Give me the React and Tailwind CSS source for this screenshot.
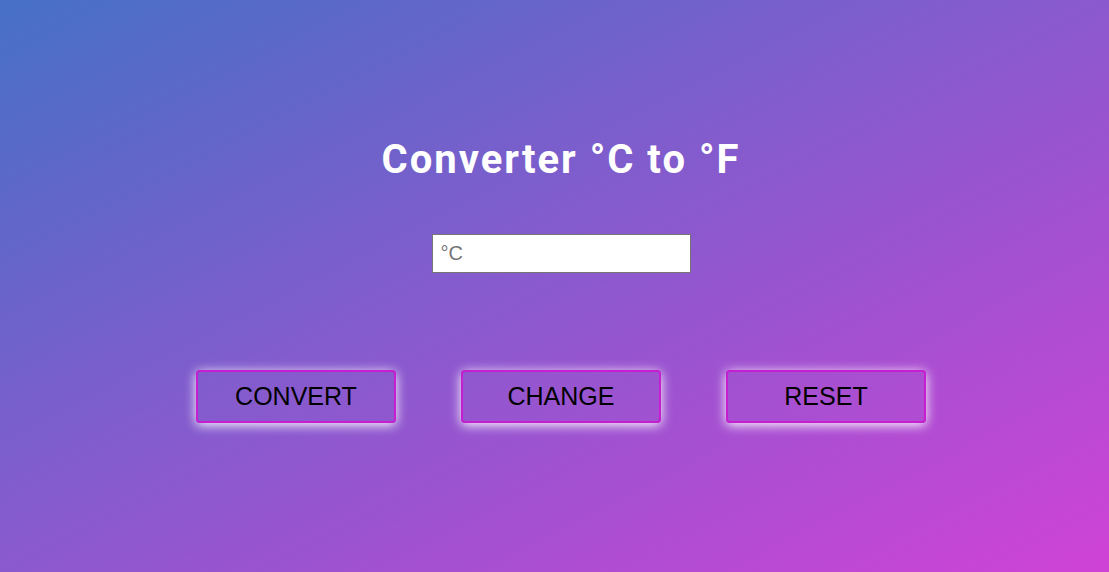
export default function App() {
  return (
    <div className="h-[572px] w-full pl-[13px] bg-[linear-gradient(to_bottom_right,#4670c6,#cf42d6)] flex flex-col items-center">
      <h1 className="mt-[140px] text-[40px] leading-none font-bold text-white tracking-[2px] font-['Roboto',sans-serif]">
        Converter °C to °F
      </h1>
      <input
        type="text"
        placeholder="°C"
        className="mt-[54px] w-[259px] h-[39px] bg-white border border-[#767676] px-2 text-[20px] text-black placeholder:text-[#757575] font-['Liberation_Sans',sans-serif] outline-none"
      />
      <div className="mt-[97px] flex gap-[65px]">
        {["CONVERT", "CHANGE", "RESET"].map((t) => (
          <button
            key={t}
            className="w-[200px] h-[53px] border-2 border-[#c51fd0] rounded-[4px] bg-transparent text-black text-[25px] font-['Liberation_Sans',sans-serif] shadow-[0_2px_12px_rgba(255,255,255,1)]"
          >
            {t}
          </button>
        ))}
      </div>
    </div>
  );
}
